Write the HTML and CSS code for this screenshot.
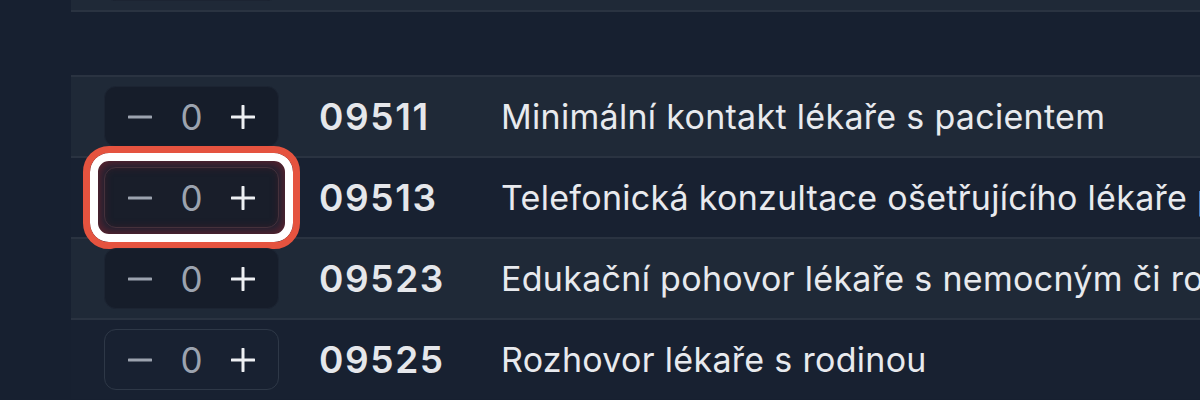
FILE: index.html
```html
<!DOCTYPE html>
<html lang="cs">
  <head>
    <meta charset="UTF-8" />
    <meta name="viewport" content="width=device-width, initial-scale=1.0" />
    <title>Výkony</title>
    <link rel="stylesheet" href="styles.css">
  </head>
  <body>
    <div class="page">
      <div class="group group-top">
        <div class="row row-light">
          <div class="stepper"></div>
        </div>
      </div>

      <div class="group">
        <div class="row row-light">
          <div class="stepper">
            <button class="step minus"><svg viewBox="0 0 24 24"><path d="M1 12h22"/></svg></button>
            <span class="count">0</span>
            <button class="step plus"><svg viewBox="0 0 24 24"><path d="M1 12h22M12 1v22"/></svg></button>
          </div>
          <div class="code">09511</div>
          <div class="desc">Minimální kontakt lékaře s pacientem</div>
        </div>
        <div class="row row-dark">
          <div class="stepper stepper-marked">
            <button class="step minus"><svg viewBox="0 0 24 24"><path d="M1 12h22"/></svg></button>
            <span class="count">0</span>
            <button class="step plus"><svg viewBox="0 0 24 24"><path d="M1 12h22M12 1v22"/></svg></button>
            <span class="highlight"></span>
          </div>
          <div class="code">09513</div>
          <div class="desc">Telefonická konzultace ošetřujícího lékaře pacientem</div>
        </div>
        <div class="row row-light">
          <div class="stepper">
            <button class="step minus"><svg viewBox="0 0 24 24"><path d="M1 12h22"/></svg></button>
            <span class="count">0</span>
            <button class="step plus"><svg viewBox="0 0 24 24"><path d="M1 12h22M12 1v22"/></svg></button>
          </div>
          <div class="code">09523</div>
          <div class="desc">Edukační pohovor lékaře s nemocným či rodinou</div>
        </div>
        <div class="row row-dark">
          <div class="stepper stepper-outline">
            <button class="step minus"><svg viewBox="0 0 24 24"><path d="M1 12h22"/></svg></button>
            <span class="count">0</span>
            <button class="step plus"><svg viewBox="0 0 24 24"><path d="M1 12h22M12 1v22"/></svg></button>
          </div>
          <div class="code">09525</div>
          <div class="desc">Rozhovor lékaře s rodinou</div>
        </div>
      </div>
    </div>
  </body>
</html>
```

FILE: styles.css
```css
body {
  margin: 0;
  height: 400px;
  overflow: hidden;
  background: #172030;
  font-family: "Inter", "Noto Sans", sans-serif;
  color: #e5e7eb;
}
.page {
  padding-left: 71px;
}
.group {
  background: #182131;
}
.group-top {
  margin-top: -69px;
  margin-bottom: 63px;
}
.row {
  display: flex;
  align-items: center;
  height: 79px;
  padding-left: 33px;
  border-top: 2px solid #2a3341;
  white-space: nowrap;
}
.group-top .row {
  border-top: none;
  border-bottom: 2px solid #2a3341;
}
.row-light {
  background: #1f2937;
}
.row-dark {
  background: #182131;
}
.stepper {
  position: relative;
  display: flex;
  align-items: center;
  justify-content: space-between;
  box-sizing: border-box;
  width: 175px;
  height: 61px;
  padding: 0 23px 0 23px;
  background: #161d2a;
  border: 1px solid #1c2432;
  border-radius: 12px;
  flex-shrink: 0;
}
.stepper-outline {
  background: transparent;
  border-color: #2e3847;
}
.stepper-marked {
  background: #191e2a;
  border-color: #3a343f;
}
.step {
  display: flex;
  background: none;
  border: none;
  padding: 0;
  cursor: pointer;
}
.step svg {
  width: 24px;
  height: 24px;
  fill: none;
  stroke-width: 3;
  stroke-linecap: round;
}
.minus svg {
  stroke: #9ca3af;
}
.plus svg {
  stroke: #eef0f3;
}
.count {
  font-size: 35px;
  color: #9ca3af;
}
.highlight {
  position: absolute;
  top: -22px;
  left: -22px;
  right: -22px;
  bottom: -22px;
  border: 7px solid #e5533f;
  border-radius: 26px;
  box-shadow: inset 0 0 0 8px #ffffff, inset 0 0 12px 10px rgba(120, 35, 45, 0.8);
  pointer-events: none;
}
.code {
  width: 182px;
  margin-left: 40px;
  font-size: 37px;
  font-weight: 600;
  letter-spacing: 1.6px;
  color: #e5e7eb;
  flex-shrink: 0;
}
.desc {
  font-size: 34px;
  letter-spacing: 0.3px;
  color: #e8eaee;
}
```
